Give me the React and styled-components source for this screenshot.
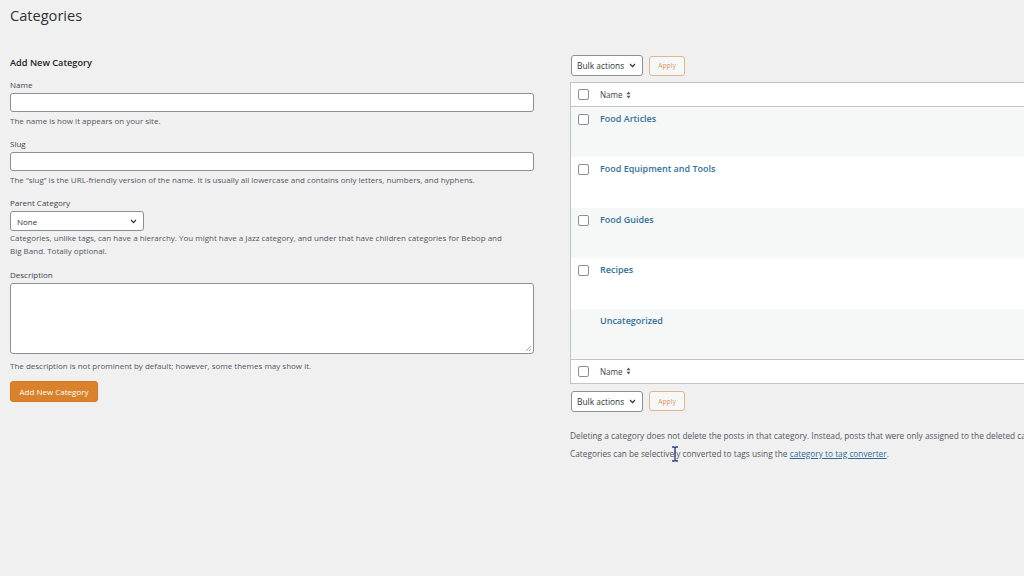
import React from 'react';
import styled, { createGlobalStyle } from 'styled-components';

const GlobalStyle = createGlobalStyle`
  html, body {
    margin: 0;
    padding: 0;
    background: #f0f0f1;
    overflow: hidden;
  }
  body {
    font-family: "Open Sans", "Noto Sans", sans-serif;
    color: #3c434a;
  }
`;

const Page = styled.div`
  position: relative;
  width: 1500px;
  min-height: 576px;
  padding: 6px 0 0 10px;
  box-sizing: border-box;
`;

const Title = styled.h1`
  margin: 0;
  font-size: 14.6px;
  font-weight: 400;
  line-height: 18px;
  color: #2c3338;
`;

const Columns = styled.div`
  display: grid;
  grid-template-columns: 524px 1fr;
  column-gap: 36px;
  margin-top: 31px;
`;

const LeftCol = styled.div`
  display: flex;
  flex-direction: column;
`;

const SectionTitle = styled.h2`
  margin: 0 0 9px;
  font-size: 9.2px;
  font-weight: 600;
  line-height: 16px;
  color: #1d2327;
`;

const Field = styled.div`
  display: flex;
  flex-direction: column;
  margin-bottom: ${(p) => p.$gap ?? 13}px;
`;

const Label = styled.label`
  font-size: 8px;
  line-height: 10px;
  margin-bottom: 3px;
  color: #3c434a;
`;

const TextInput = styled.div`
  height: 19px;
  background: #fff;
  border: 1px solid #8c8f94;
  border-radius: 3px;
  box-sizing: border-box;
`;

const TextArea = styled.div`
  position: relative;
  height: 71px;
  background: #fff;
  border: 1px solid #8c8f94;
  border-radius: 3px;
  box-sizing: border-box;
`;

const Grip = styled.svg`
  position: absolute;
  right: 1px;
  bottom: 1px;
`;

const Help = styled.p`
  margin: ${(p) => p.$top ?? 4}px 0 0;
  max-width: ${(p) => p.$maxw || 524}px;
  font-size: 8px;
  line-height: ${(p) => p.$lh || 10}px;
  color: #50575e;
`;

const SelectBox = styled.div`
  display: flex;
  align-items: center;
  justify-content: space-between;
  width: ${(p) => p.$w}px;
  height: ${(p) => p.$h || 20}px;
  padding: 0 6px 0 ${(p) => p.$pl || 6}px;
  background: #fff;
  border: 1px solid #8c8f94;
  border-radius: 3px;
  box-sizing: border-box;
  font-size: ${(p) => p.$fs || 8}px;
  color: #2c3338;
`;

const PrimaryButton = styled.button`
  align-self: flex-start;
  margin-top: 10px;
  height: 21px;
  width: 88px;
  padding: 0;
  background: #d9822b;
  border: 1px solid #d47a24;
  border-radius: 3px;
  color: #fff;
  font-family: inherit;
  font-size: 8px;
`;

const RightCol = styled.div`
  display: flex;
  flex-direction: column;
`;

const TableNav = styled.div`
  display: flex;
  align-items: center;
  gap: 6px;
  margin: ${(p) => p.$top || 0}px 0 0 1px;
`;

const ApplyButton = styled.button`
  height: 20px;
  width: 36px;
  padding: 0;
  background: #f6f7f7;
  border: 1px solid #e2b48a;
  border-radius: 3px;
  color: #d99a66;
  font-family: inherit;
  font-size: 6.8px;
`;

const Table = styled.div`
  margin-top: 6px;
  background: #fff;
  border: 1px solid #c3c4c7;
`;

const HeadRow = styled.div`
  display: flex;
  align-items: center;
  height: 23px;
  padding-left: 7px;
  border-${(p) => (p.$foot ? 'top' : 'bottom')}: 1px solid #c3c4c7;
  font-size: 8.1px;
  color: #3c434a;
`;

const Row = styled.div`
  display: flex;
  align-items: flex-start;
  height: 50.4px;
  padding: 6px 0 0 7px;
  box-sizing: border-box;
  background: ${(p) => (p.$striped ? '#f6f7f7' : '#fff')};
`;

const Check = styled.span`
  flex: none;
  width: 11px;
  height: 11px;
  margin-top: ${(p) => p.$top || 0}px;
  border: 1px solid #8c8f94;
  border-radius: 2px;
  background: #fff;
  box-sizing: border-box;
  visibility: ${(p) => (p.$hidden ? 'hidden' : 'visible')};
`;

const HeadName = styled.span`
  display: flex;
  align-items: center;
  gap: 3px;
  margin-left: 11px;
`;

const RowTitle = styled.a`
  margin-left: 11px;
  font-size: 9px;
  font-weight: 600;
  line-height: 12px;
  color: #34709a;
  text-decoration: none;
`;

const Notes = styled.div`
  margin-top: 15px;
  font-size: 8.3px;
  line-height: 18px;
  color: #50575e;
  white-space: nowrap;
`;

const NoteLink = styled.a`
  color: #2f6c94;
  text-decoration: underline;
`;

const Cursor = styled.svg`
  position: absolute;
  left: 671px;
  top: 446px;
`;

const Chevron = () => (
  <svg width="7" height="5" viewBox="0 0 7 5">
    <path d="M1 1 L3.5 3.6 L6 1" fill="none" stroke="#2c3338" strokeWidth="1.2" />
  </svg>
);

const SortIcon = () => (
  <svg width="5" height="8" viewBox="0 0 5 8">
    <path d="M2.5 0.5 L4.5 3.2 H0.5 Z" fill="#50575e" />
    <path d="M2.5 7.5 L4.5 4.8 H0.5 Z" fill="#50575e" />
  </svg>
);

const BulkActions = ({ top }) => (
  <TableNav $top={top}>
    <SelectBox $w={72} $h={21} $pl={5} $fs={8.4}>
      Bulk actions <Chevron />
    </SelectBox>
    <ApplyButton>Apply</ApplyButton>
  </TableNav>
);

const categories = [
  { name: 'Food Articles', check: true },
  { name: 'Food Equipment and Tools', check: true },
  { name: 'Food Guides', check: true },
  { name: 'Recipes', check: true },
  { name: 'Uncategorized', check: false },
];

export default function App() {
  return (
    <Page>
      <GlobalStyle />
      <Title>Categories</Title>
      <Columns>
        <LeftCol>
          <SectionTitle>Add New Category</SectionTitle>
          <Field>
            <Label>Name</Label>
            <TextInput />
            <Help>The name is how it appears on your site.</Help>
          </Field>
          <Field>
            <Label>Slug</Label>
            <TextInput />
            <Help>
              The “slug” is the URL-friendly version of the name. It is usually all lowercase and
              contains only letters, numbers, and hyphens.
            </Help>
          </Field>
          <Field>
            <Label>Parent Category</Label>
            <SelectBox $w={134}>
              None <Chevron />
            </SelectBox>
            <Help $top={1} $lh={12.5} $maxw={505}>
              Categories, unlike tags, can have a hierarchy. You might have a Jazz category, and
              under that have children categories for Bebop and Big Band. Totally optional.
            </Help>
          </Field>
          <Field $gap={0}>
            <Label>Description</Label>
            <TextArea>
              <Grip width="7" height="7" viewBox="0 0 7 7">
                <path d="M6 1 L1 6 M6 4 L4 6" stroke="#8c8f94" strokeWidth="0.8" />
              </Grip>
            </TextArea>
            <Help $top={7}>
              The description is not prominent by default; however, some themes may show it.
            </Help>
          </Field>
          <PrimaryButton>Add New Category</PrimaryButton>
        </LeftCol>

        <RightCol>
          <BulkActions />
          <Table>
            <HeadRow>
              <Check />
              <HeadName>
                Name <SortIcon />
              </HeadName>
            </HeadRow>
            {categories.map((c, i) => (
              <Row key={c.name} $striped={i % 2 === 0}>
                <Check $top={1} $hidden={!c.check} />
                <RowTitle>{c.name}</RowTitle>
              </Row>
            ))}
            <HeadRow $foot>
              <Check />
              <HeadName>
                Name <SortIcon />
              </HeadName>
            </HeadRow>
          </Table>
          <BulkActions top={7} />
          <Notes>
            Deleting a category does not delete the posts in that category. Instead, posts that were
            only assigned to the deleted category are set to the default category Uncategorized.
            <br />
            Categories can be selectively converted to tags using the{' '}
            <NoteLink>category to tag converter</NoteLink>.
          </Notes>
        </RightCol>
      </Columns>
      <Cursor width="8" height="16" viewBox="0 0 8 16">
        <path
          d="M1 1 H3 L4 2 L5 1 H7 M4 2 V14 M1 15 H3 L4 14 L5 15 H7"
          fill="none"
          stroke="#2a3f8f"
          strokeWidth="1.3"
        />
      </Cursor>
    </Page>
  );
}
